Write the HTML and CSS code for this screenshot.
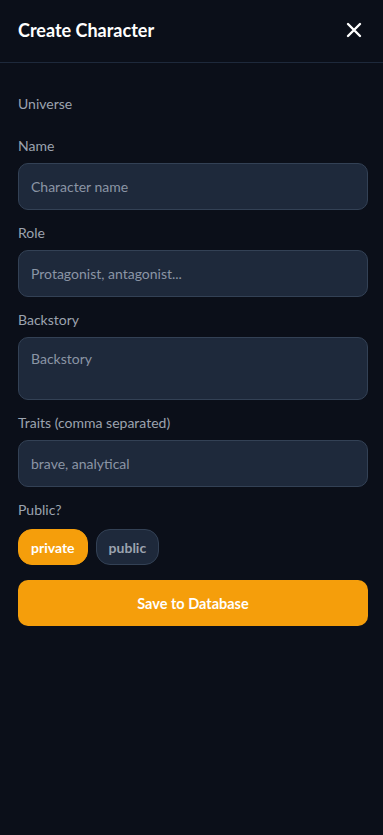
FILE: index.html
```html
<!DOCTYPE html>
<html lang="en">
<head>
<meta charset="utf-8">
<title>Create Character</title>
<link rel="stylesheet" href="styles.css">
</head>
<body>
<div class="panel">
  <header class="header">
    <h1 class="title">Create Character</h1>
    <button class="close" aria-label="Close">
      <svg width="16" height="16" viewBox="0 0 16 16"><path d="M2 2 L14 14 M14 2 L2 14" stroke="#ffffff" stroke-width="2.4" stroke-linecap="round"/></svg>
    </button>
  </header>
  <form class="form">
    <div class="field field-universe">
      <label class="label">Universe</label>
    </div>
    <div class="field">
      <label class="label">Name</label>
      <div class="input">Character name</div>
    </div>
    <div class="field">
      <label class="label">Role</label>
      <div class="input">Protagonist, antagonist...</div>
    </div>
    <div class="field">
      <label class="label">Backstory</label>
      <div class="input textarea">Backstory</div>
    </div>
    <div class="field">
      <label class="label">Traits (comma separated)</label>
      <div class="input">brave, analytical</div>
    </div>
    <div class="field field-public">
      <label class="label">Public?</label>
      <div class="pills">
        <button type="button" class="pill pill-active">private</button>
        <button type="button" class="pill">public</button>
      </div>
    </div>
    <button type="button" class="save">Save to Database</button>
  </form>
</div>
</body>
</html>
```
FILE: styles.css
```css
* { box-sizing: border-box; }
html, body {
  margin: 0;
  padding: 0;
  background: #0b0f19;
  height: 100%;
}
body {
  font-family: Lato, "Noto Sans", "Liberation Sans", sans-serif;
  color: #9ca3af;
}
.panel {
  min-height: 100%;
}
.header {
  height: 63px;
  display: flex;
  align-items: center;
  justify-content: space-between;
  padding: 0 18px 2px 18px;
  border-bottom: 1px solid #1e293b;
}
.title {
  margin: 0;
  font-size: 18px;
  font-weight: 700;
  color: #ffffff;
}
.close {
  background: none;
  border: 0;
  padding: 0;
  width: 16px;
  height: 16px;
  display: flex;
  cursor: pointer;
  margin-right: 3px;
}
.form {
  padding: 31px 15px 0 18px;
  display: flex;
  flex-direction: column;
}
.field {
  display: flex;
  flex-direction: column;
  margin-bottom: 13px;
}
.field-universe {
  margin-bottom: 22px;
}
.label {
  font-size: 14px;
  line-height: 20px;
  color: #9ca3af;
  margin-bottom: 7px;
}
.field-universe .label { margin-bottom: 0; }
.input {
  height: 47px;
  background: #1e293b;
  border: 1px solid #334155;
  border-radius: 10px;
  padding: 0 12px;
  display: flex;
  align-items: center;
  font-size: 14px;
  color: #8b95a5;
}
.textarea {
  height: 63px;
  align-items: flex-start;
  padding-top: 12px;
}
.field-public .label { margin-bottom: 9px; }
.field-public { margin-bottom: 15px; }
.pills {
  display: flex;
  gap: 8px;
}
.pill {
  height: 36px;
  padding: 0 12px;
  border-radius: 14px;
  border: 1px solid #334155;
  background: #1e293b;
  color: #9ca3af;
  font-family: inherit;
  font-size: 14px;
  font-weight: 700;
}
.pill-active {
  background: #f59e0b;
  border-color: #f59e0b;
  color: #ffffff;
}
.save {
  height: 46px;
  border: 0;
  border-radius: 10px;
  background: #f59e0b;
  color: #ffffff;
  font-family: inherit;
  font-size: 14.5px;
  font-weight: 700;
}
```
